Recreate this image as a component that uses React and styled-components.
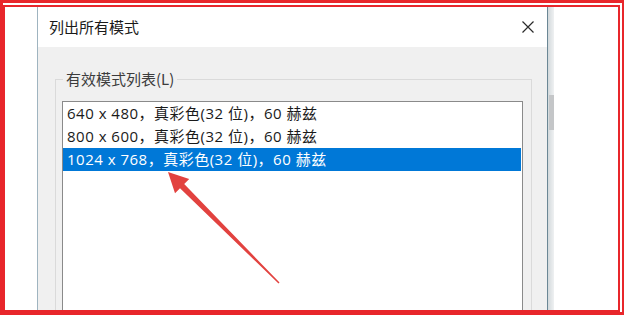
import React from "react";
import styled, { createGlobalStyle } from "styled-components";

const GlobalStyle = createGlobalStyle`
  html, body {
    margin: 0;
    padding: 0;
    background: #fff;
    overflow: hidden;
  }
  * {
    box-sizing: border-box;
  }
`;

const Page = styled.div`
  position: relative;
  width: 624px;
  height: 315px;
  overflow: hidden;
  font-family: "Noto Sans CJK SC", "Noto Sans", sans-serif;
`;

const Frame = styled.div`
  width: 624px;
  height: 315px;
  border: 3px solid #e8262b;
  border-right-width: 2px;
  padding: 2px 2px 0 0;
  display: flex;
`;

const Inner = styled.div`
  flex: 1;
  border: 2px solid #e8262b;
  display: flex;
  overflow: hidden;
  background: #fff;
`;

const Spacer = styled.div`
  width: 32px;
  flex: none;
`;

const Dialog = styled.div`
  width: 511px;
  flex: none;
  display: flex;
  flex-direction: column;
  background: #f0f0f0;
  border-left: 1px solid #9fb4c0;
  border-right: 1px solid #6b8795;
  overflow: hidden;
`;

const TitleBar = styled.div`
  height: 40px;
  flex: none;
  background: #fff;
  display: flex;
  align-items: center;
  justify-content: space-between;
  padding: 0 13px 0 11px;
`;

const Title = styled.span`
  font-size: 15px;
  color: #1a1a1a;
  line-height: 20px;
`;

const CloseButton = styled.div`
  width: 12px;
  height: 12px;
  display: flex;
`;

const Body = styled.div`
  flex: 1;
  padding: 22px 15px 0 17px;
  overflow: hidden;
`;

const GroupBox = styled.fieldset`
  margin: 0;
  border: 1px solid #dadada;
  padding: 12px 8px 0 6px;
  height: 400px;
`;

const GroupLabel = styled.legend`
  padding: 0 3px;
  margin-left: 1px;
  font-size: 15px;
  line-height: 20px;
  color: #3c3c3c;
`;

const ListBox = styled.div`
  background: #fff;
  border: 1px solid #8a8a8a;
  height: 320px;
`;

const Row = styled.div`
  height: 23px;
  line-height: 23px;
  padding-left: 4px;
  margin-right: 1px;
  font-family: "Open Sans", "Noto Sans CJK SC", sans-serif;
  font-size: 15px;
  letter-spacing: 0.5px;
  white-space: nowrap;
  color: ${(p) => (p.$selected ? "#fff" : "#1a1a1a")};
  background: ${(p) => (p.$selected ? "#0078d7" : "transparent")};
`;

const Edge = styled.div`
  width: 6px;
  flex: none;
  background: linear-gradient(to right, #d3d9dc, #eff1f2);
`;

const Thumb = styled.div`
  margin-top: 88px;
  margin-left: 1px;
  height: 35px;
  background: #c4c6c8;
`;

const Arrow = styled.svg`
  position: absolute;
  left: 0;
  top: 0;
  width: 624px;
  height: 315px;
  pointer-events: none;
`;

const modes = [
  "640 x 480，真彩色(32 位)，60 赫兹",
  "800 x 600，真彩色(32 位)，60 赫兹",
  "1024 x 768，真彩色(32 位)，60 赫兹",
];

export default function App() {
  return (
    <Page>
      <GlobalStyle />
      <Frame>
        <Inner>
          <Spacer />
          <Dialog>
            <TitleBar>
              <Title>列出所有模式</Title>
              <CloseButton>
                <svg width="12" height="12" viewBox="0 0 12 12">
                  <path d="M0.5 0.5 L11.5 11.5 M11.5 0.5 L0.5 11.5" stroke="#2b2b2b" strokeWidth="1.2" fill="none" />
                </svg>
              </CloseButton>
            </TitleBar>
            <Body>
              <GroupBox>
                <GroupLabel>有效模式列表(L)</GroupLabel>
                <ListBox>
                  {modes.map((m, i) => (
                    <Row key={m} $selected={i === 2}>
                      {m}
                    </Row>
                  ))}
                </ListBox>
              </GroupBox>
            </Body>
          </Dialog>
          <Edge>
            <Thumb />
          </Edge>
        </Inner>
      </Frame>
      <Arrow viewBox="0 0 624 315">
        <polygon
          points="168,172 189.2,179 184.2,184 279.5,282.5 278.5,283.5 180,188.2 175,193.2"
          fill="#e2423f"
        />
      </Arrow>
    </Page>
  );
}
